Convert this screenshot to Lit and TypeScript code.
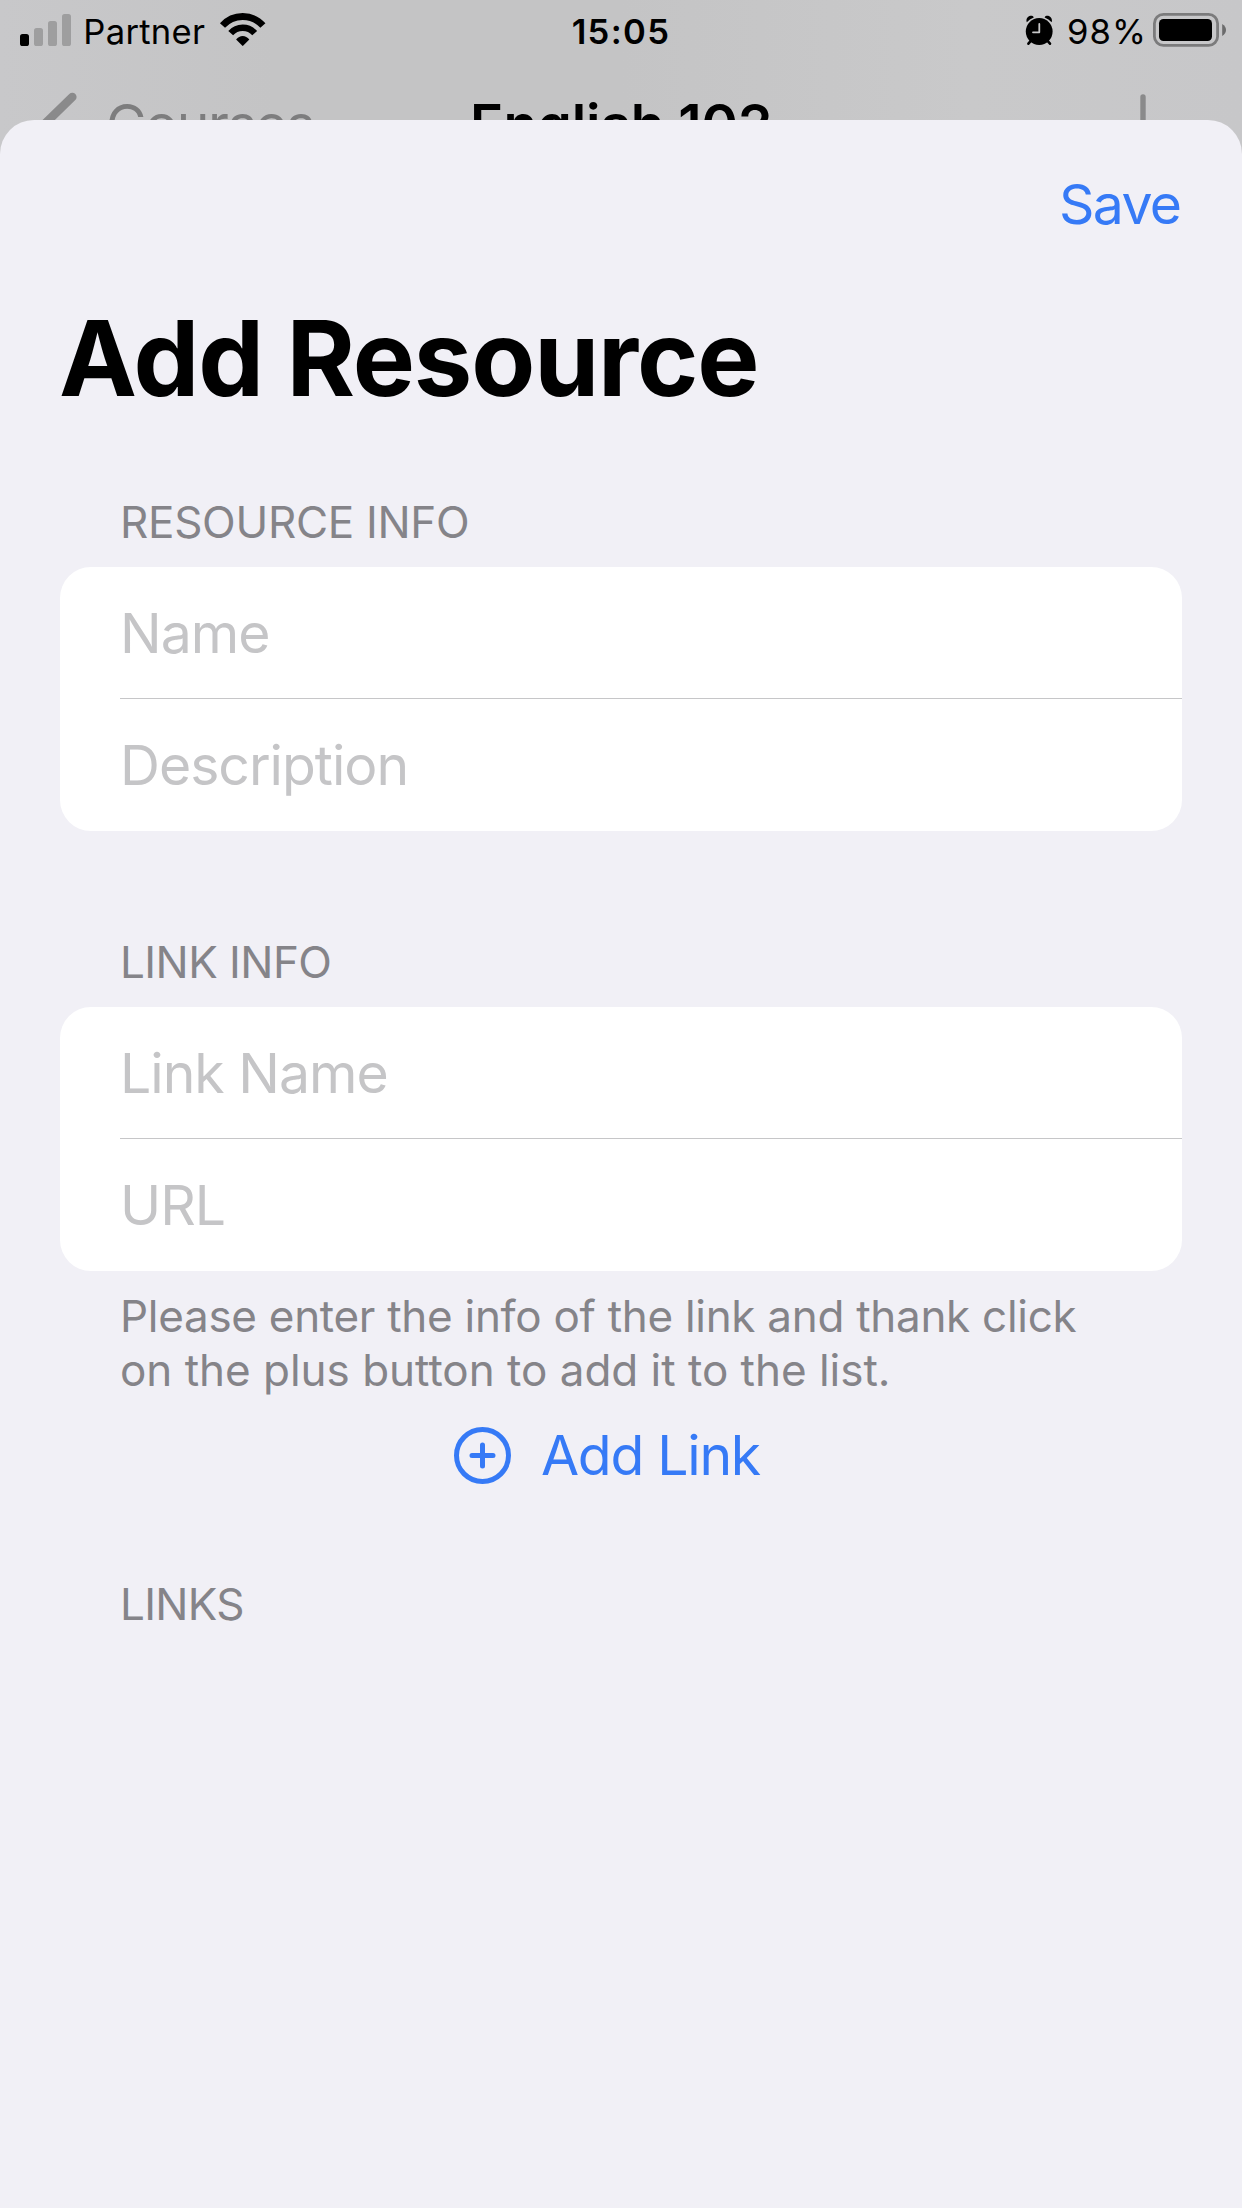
import { LitElement, html, css, svg } from "lit";
import { customElement, property } from "lit/decorators.js";

const wifiIcon = svg`
  <path d="M222.8 25.6A27 27 0 0 1 263.2 25.6" fill="none" stroke="#000" stroke-width="6.8"/>
  <path d="M231 33.2A15.9 15.9 0 0 1 255 33.2" fill="none" stroke="#000" stroke-width="6.4"/>
  <path d="M236.4 39.6Q239.2 36 243 36T249.6 39.6L243.6 45.6Q243 46.2 242.4 45.6Z"/>`;

const alarmIcon = svg`
  <circle cx="1039.2" cy="31.5" r="13.4"/>
  <path d="M1026.8 22.2C1024.8 17.4 1031.6 13.6 1033.8 17.4Q1029.6 18.8 1026.8 22.2Z"/>
  <path d="M1051.6 22.2C1053.6 17.4 1046.8 13.6 1044.6 17.4Q1048.8 18.8 1051.6 22.2Z"/>
  <path d="M1031.5 40.2L1028.4 43.7M1046.9 40.2L1050 43.7" stroke="#000" stroke-width="2.6" stroke-linecap="round"/>
  <path d="M1039.3 24V32.3H1033" fill="none" stroke="#c8c8c9" stroke-width="1.8" stroke-linecap="round" stroke-linejoin="round"/>`;

const batteryIcon = svg`
  <rect x="1154.4" y="14.4" width="63.2" height="31" rx="9" fill="none" stroke="#7b7b7c" stroke-width="2.8"/>
  <rect x="1159" y="19" width="53" height="22" rx="4.5"/>
  <path d="M1222.2 24Q1226 26.4 1226 30T1222.2 36Z" fill="#6b6b6c"/>`;

@customElement("status-bar")
class StatusBar extends LitElement {
  static styles = css`
    :host {
      display: grid;
      grid-template-columns: 1fr auto 1fr;
      height: 60px;
      box-sizing: border-box;
      padding: 11px 16px 0 20px;
      font-size: 34.6px;
      line-height: 41px;
      color: #000;
    }
    .left { display: flex; }
    .right { display: flex; justify-content: flex-end; }
    svg { display: block; flex: none; }
    .signal { width: 51px; height: 34px; margin-top: 2px; }
    .carrier { margin-left: 12.3px; letter-spacing: 0.3px; width: 123px; }
    .wifi { width: 48px; height: 35px; margin-top: 1px; margin-left: 13px; }
    .time { font-weight: 600; letter-spacing: 1.35px; margin: 0 3px 0 -1px; }
    .alarm { width: 29px; height: 33px; margin-top: 3px; }
    .percent { margin-left: 13px; width: 85px; letter-spacing: 1.1px; white-space: nowrap; }
    .battery { width: 74px; height: 36px; margin-top: 1px; }
  `;
  render() {
    return html`
      <div class="left">
        <svg class="signal" viewBox="20 13 51 34">
          <rect x="20" y="34" width="9" height="12" rx="2.6"></rect>
          <rect x="34" y="28" width="9" height="18" rx="2.6" fill="#9e9e9f"></rect>
          <rect x="48" y="21" width="9" height="25" rx="2.6" fill="#9e9e9f"></rect>
          <rect x="62" y="14" width="9" height="32" rx="2.6" fill="#9e9e9f"></rect>
        </svg>
        <span class="carrier">Partner</span>
        <svg class="wifi" viewBox="219.3 12 48 35">${wifiIcon}</svg>
      </div>
      <span class="time">15:05</span>
      <div class="right">
        <svg class="alarm" viewBox="1025 14 29 33">${alarmIcon}</svg>
        <span class="percent">98%</span>
        <svg class="battery" viewBox="1152 12 74 36">${batteryIcon}</svg>
      </div>
    `;
  }
}

@customElement("form-group")
class FormGroup extends LitElement {
  @property() heading = "";
  @property({ attribute: false }) fields: string[] = [];
  static styles = css`
    :host { display: block; }
    .heading {
      margin: 0 0 18px 60px;
      font-size: 44px;
      line-height: 54px;
      font-weight: 400;
      color: #858489;
      letter-spacing: var(--heading-spacing, -0.3px);
    }
    .card {
      background: #fff;
      border-radius: 31px;
      height: 264px;
      overflow: hidden;
    }
    .field {
      box-sizing: border-box;
      height: 132px;
      margin-left: 60px;
      padding-top: 32px;
      font-size: 55.3px;
      line-height: 67px;
      letter-spacing: -1px;
      color: #c5c5c7;
    }
    .field:not(:last-child) { border-bottom: 1px solid #c6c6c8; }
  `;
  render() {
    return html`
      <h2 class="heading">${this.heading}</h2>
      ${this.fields.length
        ? html`<div class="card">${this.fields.map((f) => html`<div class="field">${f}</div>`)}</div>`
        : null}
    `;
  }
}

@customElement("app-root")
class AppRoot extends LitElement {
  static styles = css`
    :host {
      display: flex;
      flex-direction: column;
      height: 2208px;
      font-family: Inter, "Liberation Sans", sans-serif;
      background: linear-gradient(90deg, #c8c8ca 0, #c4c4c5 22%, #c4c4c5 50%, #c9c9ca 78%, #c7c7c9 100%);
      overflow: hidden;
    }
    .nav {
      display: flex;
      height: 60px;
      overflow: hidden;
      font-size: 55.3px;
      line-height: 67px;
      white-space: nowrap;
    }
    .nav > * { flex: none; }
    .chevron { width: 46px; height: 60px; margin-left: 34px; }
    .back { margin: 30px 0 0 26px; width: 364px; letter-spacing: -1.42px; color: #7d7d7e; }
    .heading { margin-top: 30px; width: 643px; font-weight: 600; letter-spacing: -0.09px; color: #000; }
    .plus { width: 60px; height: 60px; }
    .sheet {
      flex: 1;
      box-sizing: border-box;
      padding: 50px 60px 0;
      border-radius: 34px 34px 0 0;
      background: #f1f0f6;
    }
    .save {
      padding-right: 1.7px;
      text-align: right;
      font-size: 55.3px;
      line-height: 67px;
      letter-spacing: -1.67px;
      color: #367af6;
    }
    .title {
      margin: 58px 0 74px -1px;
      font-size: 104.5px;
      line-height: 126px;
      font-weight: 700;
      letter-spacing: -1.15px;
      color: #000;
    }
    .link-info { margin-top: 104px; --heading-spacing: -0.55px; }
    .links { margin-top: 89px; --heading-spacing: -0.7px; }
    .note {
      margin: 18px 0 24px 60px;
      font-size: 44px;
      line-height: 54px;
      letter-spacing: -0.29px;
      color: #858489;
      white-space: nowrap;
    }
    .note span { display: block; }
    .note .second { letter-spacing: -0.02px; }
    .add {
      display: flex;
      align-items: center;
      gap: 30px;
      height: 67px;
      padding-left: 394px;
      font-size: 55.3px;
      line-height: 67px;
      letter-spacing: -1.28px;
      color: #367af6;
    }
    .add svg { width: 57px; height: 57px; margin-top: 2px; }
  `;
  render() {
    return html`
      <status-bar></status-bar>
      <div class="nav">
        <svg class="chevron" viewBox="34 60 46 60">
          <path d="M72.3 97L40 128.5L72.3 160" fill="none" stroke="#8a8a8b" stroke-width="8.6" stroke-linecap="round" stroke-linejoin="round"></path>
        </svg>
        <span class="back">Courses</span>
        <span class="heading">English 102</span>
        <svg class="plus" viewBox="1113 60 60 60">
          <path d="M1143 97V150" stroke="#8a8a8b" stroke-width="5.4" stroke-linecap="round"></path>
        </svg>
      </div>
      <main class="sheet">
        <div class="save">Save</div>
        <h1 class="title">Add Resource</h1>
        <form-group heading="RESOURCE INFO" .fields=${["Name", "Description"]}></form-group>
        <form-group class="link-info" heading="LINK INFO" .fields=${["Link Name", "URL"]}></form-group>
        <div class="note">
          <span>Please enter the info of the link and thank click</span>
          <span class="second">on the plus button to add it to the list.</span>
        </div>
        <div class="add">
          <svg viewBox="0 0 57 57" fill="none" stroke="#367af6" stroke-width="5" stroke-linecap="round">
            <circle cx="28.5" cy="28.5" r="26"></circle>
            <path d="M18 28.5H39M28.5 18V39"></path>
          </svg>
          <span>Add Link</span>
        </div>
        <form-group class="links" heading="LINKS"></form-group>
      </main>
    `;
  }
}
